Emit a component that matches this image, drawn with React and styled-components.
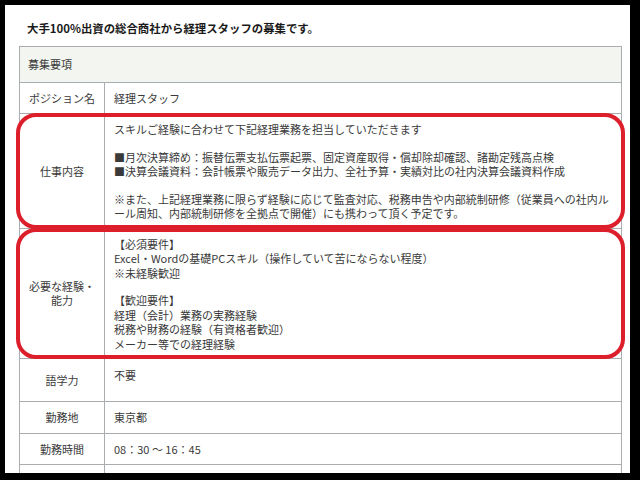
import React from "react";
import styled, { createGlobalStyle, css } from "styled-components";

const Global = createGlobalStyle`
  html, body { margin: 0; padding: 0; background: #000; }
  body { font-family: "Noto Sans CJK JP", "Noto Sans", sans-serif; }
`;

const Panel = styled.div`
  margin: 5px 0 0 5px;
  width: 625px;
  height: 468px;
  overflow: hidden;
  background: #fff;
  box-sizing: border-box;
  padding: 15px 8px 0 14px;
`;

const Title = styled.h1`
  margin: 0 0 9px 8px;
  font-size: 11.4px;
  line-height: 17px;
  font-weight: 700;
  color: #1a1a1a;
`;

const Table = styled.div`
  border: 1px solid #a9adb0;
  border-bottom: none;
  color: #3a3a3a;
  font-size: 11px;
  line-height: 14.5px;
`;

const Row = styled.div`
  position: relative;
  display: grid;
  grid-template-columns: 85px 1fr;
  border-bottom: 1px solid #a9adb0;
  min-height: ${(p) => p.$minH || 0}px;
  ${(p) =>
    p.$highlight &&
    css`
      &::after {
        content: "";
        position: absolute;
        left: -4px;
        right: -4px;
        top: -1px;
        bottom: -1px;
        border: 4px solid #dc1f2b;
        border-radius: 20px;
        pointer-events: none;
      }
    `}
`;

const HeaderCell = styled.div`
  grid-column: 1 / -1;
  background: #f3f6f0;
  padding: 10px 8px 10px;
`;

const Label = styled.div`
  border-right: 1px solid #a9adb0;
  display: flex;
  flex-direction: column;
  align-items: center;
  justify-content: center;
  text-align: center;
  padding: 8px 4px;
`;

const Value = styled.div`
  padding: ${(p) => p.$top ?? 8}px 8px 7px 9px;
`;

const Line = styled.div`
  min-height: 14.5px;
`;

const Gap = styled.div`
  height: 13px;
`;

const rows = [
  { label: ["ポジション名"], value: ["経理スタッフ"] },
  {
    label: ["仕事内容"],
    highlight: true,
    value: [
      "スキルご経験に合わせて下記経理業務を担当していただきます",
      "",
      "■月次決算締め：振替伝票支払伝票起票、固定資産取得・償却除却確認、諸勘定残高点検",
      "■決算会議資料：会計帳票や販売データ出力、全社予算・実績対比の社内決算会議資料作成",
      "",
      "※また、上記経理業務に限らず経験に応じて監査対応、税務申告や内部統制研修（従業員への社内ル",
      "ール周知、内部統制研修を全拠点で開催）にも携わって頂く予定です。",
    ],
  },
  {
    label: ["必要な経験・", "能力"],
    highlight: true,
    value: [
      "【必須要件】",
      "Excel・Wordの基礎PCスキル（操作していて苦にならない程度）",
      "※未経験歓迎",
      "",
      "【歓迎要件】",
      "経理（会計）業務の実務経験",
      "税務や財務の経験（有資格者歓迎）",
      "メーカー等での経理経験",
    ],
  },
  { label: ["語学力"], value: ["不要"], minH: 42, top: 9 },
  { label: ["勤務地"], value: ["東京都"] },
  { label: ["勤務時間"], value: ["08：30 ～ 16：45"] },
  { label: [], value: [], minH: 40 },
];

export default function App() {
  return (
    <>
      <Global />
      <Panel>
        <Title>大手100%出資の総合商社から経理スタッフの募集です。</Title>
        <Table>
          <Row>
            <HeaderCell>募集要項</HeaderCell>
          </Row>
          {rows.map((r, i) => (
            <Row key={i} $highlight={r.highlight} $minH={r.minH}>
              <Label>
                {r.label.map((l, j) => (
                  <Line key={j}>{l}</Line>
                ))}
              </Label>
              <Value $top={r.top}>
                {r.value.map((v, j) =>
                  v === "" ? <Gap key={j} /> : <Line key={j}>{v}</Line>
                )}
              </Value>
            </Row>
          ))}
        </Table>
      </Panel>
    </>
  );
}
